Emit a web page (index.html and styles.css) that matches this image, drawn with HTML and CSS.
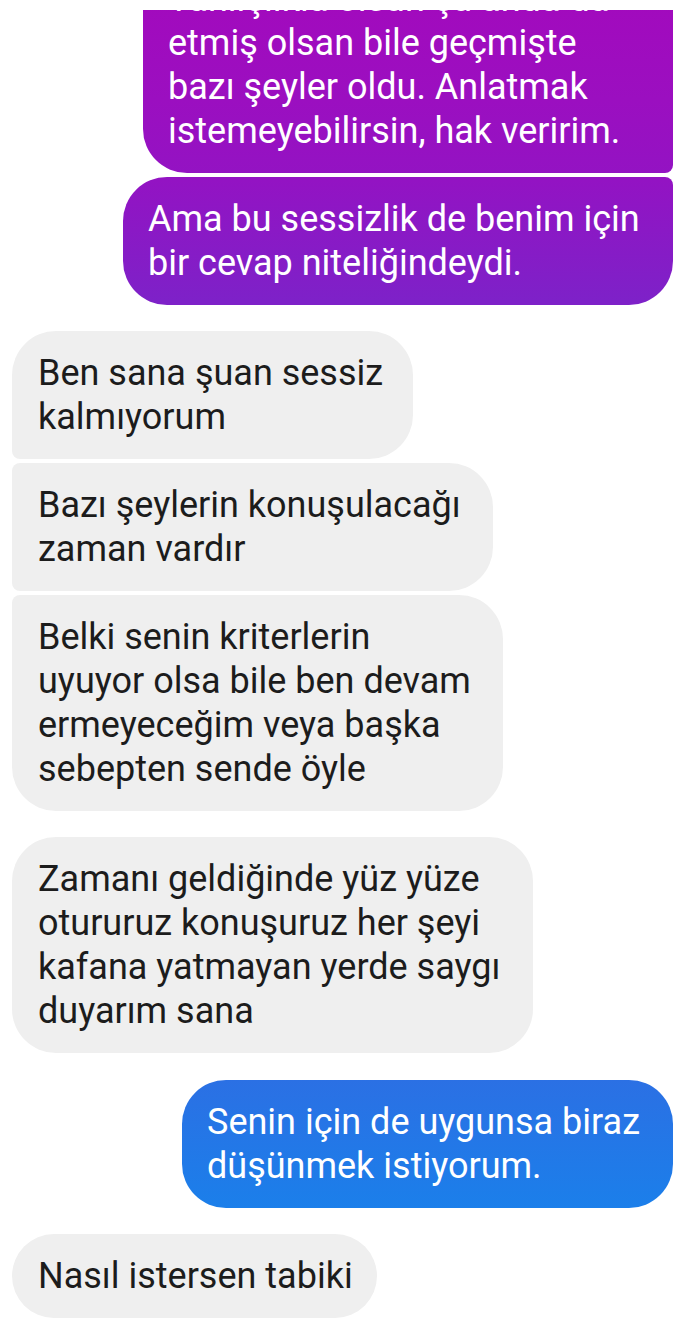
FILE: index.html
```html
<!DOCTYPE html>
<html lang="tr">
<head>
<meta charset="utf-8">
<title>Sohbet</title>
<link rel="stylesheet" href="styles.css">
</head>
<body>
<main class="thread">
  <div class="group group-out clip-top">
    <div class="bubble out grad first hidden-top w530">Yanlışlıkla olsun şu anda da<br>etmiş olsan bile geçmişte bazı şeyler oldu. Anlatmak istemeyebilirsin, hak veririm.</div>
    <div class="bubble out grad last w550">Ama bu sessizlik de benim için bir cevap niteliğindeydi.</div>
  </div>

  <div class="group group-in">
    <div class="bubble in first w401">Ben sana şuan sessiz kalmıyorum</div>
    <div class="bubble in mid w481">Bazı şeylerin konuşulacağı zaman vardır</div>
    <div class="bubble in last w491">Belki senin kriterlerin uyuyor olsa bile ben devam ermeyeceğim veya başka sebepten sende öyle</div>
  </div>

  <div class="group group-in">
    <div class="bubble in single w521">Zamanı geldiğinde yüz yüze otururuz konuşuruz her şeyi kafana yatmayan yerde saygı duyarım sana</div>
  </div>

  <div class="group group-out">
    <div class="bubble out blue single w491">Senin için de uygunsa biraz düşünmek istiyorum.</div>
  </div>

  <div class="group group-in">
    <div class="bubble in single">Nasıl istersen tabiki</div>
  </div>
</main>
</body>
</html>
```

FILE: styles.css
```css
html, body {
  margin: 0;
  padding: 0;
  background: #ffffff;
}

body {
  font-family: Roboto, "Noto Sans", "Liberation Sans", sans-serif;
  width: 690px;
  height: 1330px;
  overflow: hidden;
}

.thread {
  display: flex;
  flex-direction: column;
  padding: 0 17px 0 12px;
}

.group {
  display: flex;
  flex-direction: column;
  gap: 4px;
}

.group-out {
  align-items: flex-end;
}

.group-in {
  align-items: flex-start;
}

.clip-top {
  margin-top: 10px;
  overflow: hidden;
}

.group-in + .group-in {
  margin-top: 26px;
}

.group-in + .group-out {
  margin-top: 27px;
}

.group-out + .group-in {
  margin-top: 26px;
}

.bubble {
  box-sizing: border-box;
  font-size: 36px;
  line-height: 44px;
  padding: 20px 24px 20px 25px;
  border-radius: 44px;
}

.in {
  background: #efefef;
  color: #1c1c1c;
  padding-left: 26px;
}

.in.first {
  border-radius: 44px 44px 44px 8px;
}

.in.mid {
  border-radius: 8px 44px 44px 8px;
}

.in.last {
  border-radius: 8px 44px 44px 44px;
}

.out {
  color: #ffffff;
}

.grad {
  background: linear-gradient(180deg, #a20abd 0px, #9b0fc0 100px, #9313c3 180px, #8a19c5 230px, #7e21c8 300px);
  background-attachment: fixed;
}

.out.first {
  border-radius: 44px 44px 8px 44px;
}

.out.last {
  border-radius: 44px 8px 44px 44px;
}

.hidden-top {
  margin-top: -53px;
  border-radius: 0 0 8px 44px;
}

.blue {
  background: linear-gradient(180deg, #2b70e4 0%, #1b7fea 100%);
}

.w401 { width: 401px; }
.w481 { width: 481px; }
.w491 { width: 491px; }
.w521 { width: 521px; }
.w530 { width: 530px; }
.w550 { width: 550px; }
```
